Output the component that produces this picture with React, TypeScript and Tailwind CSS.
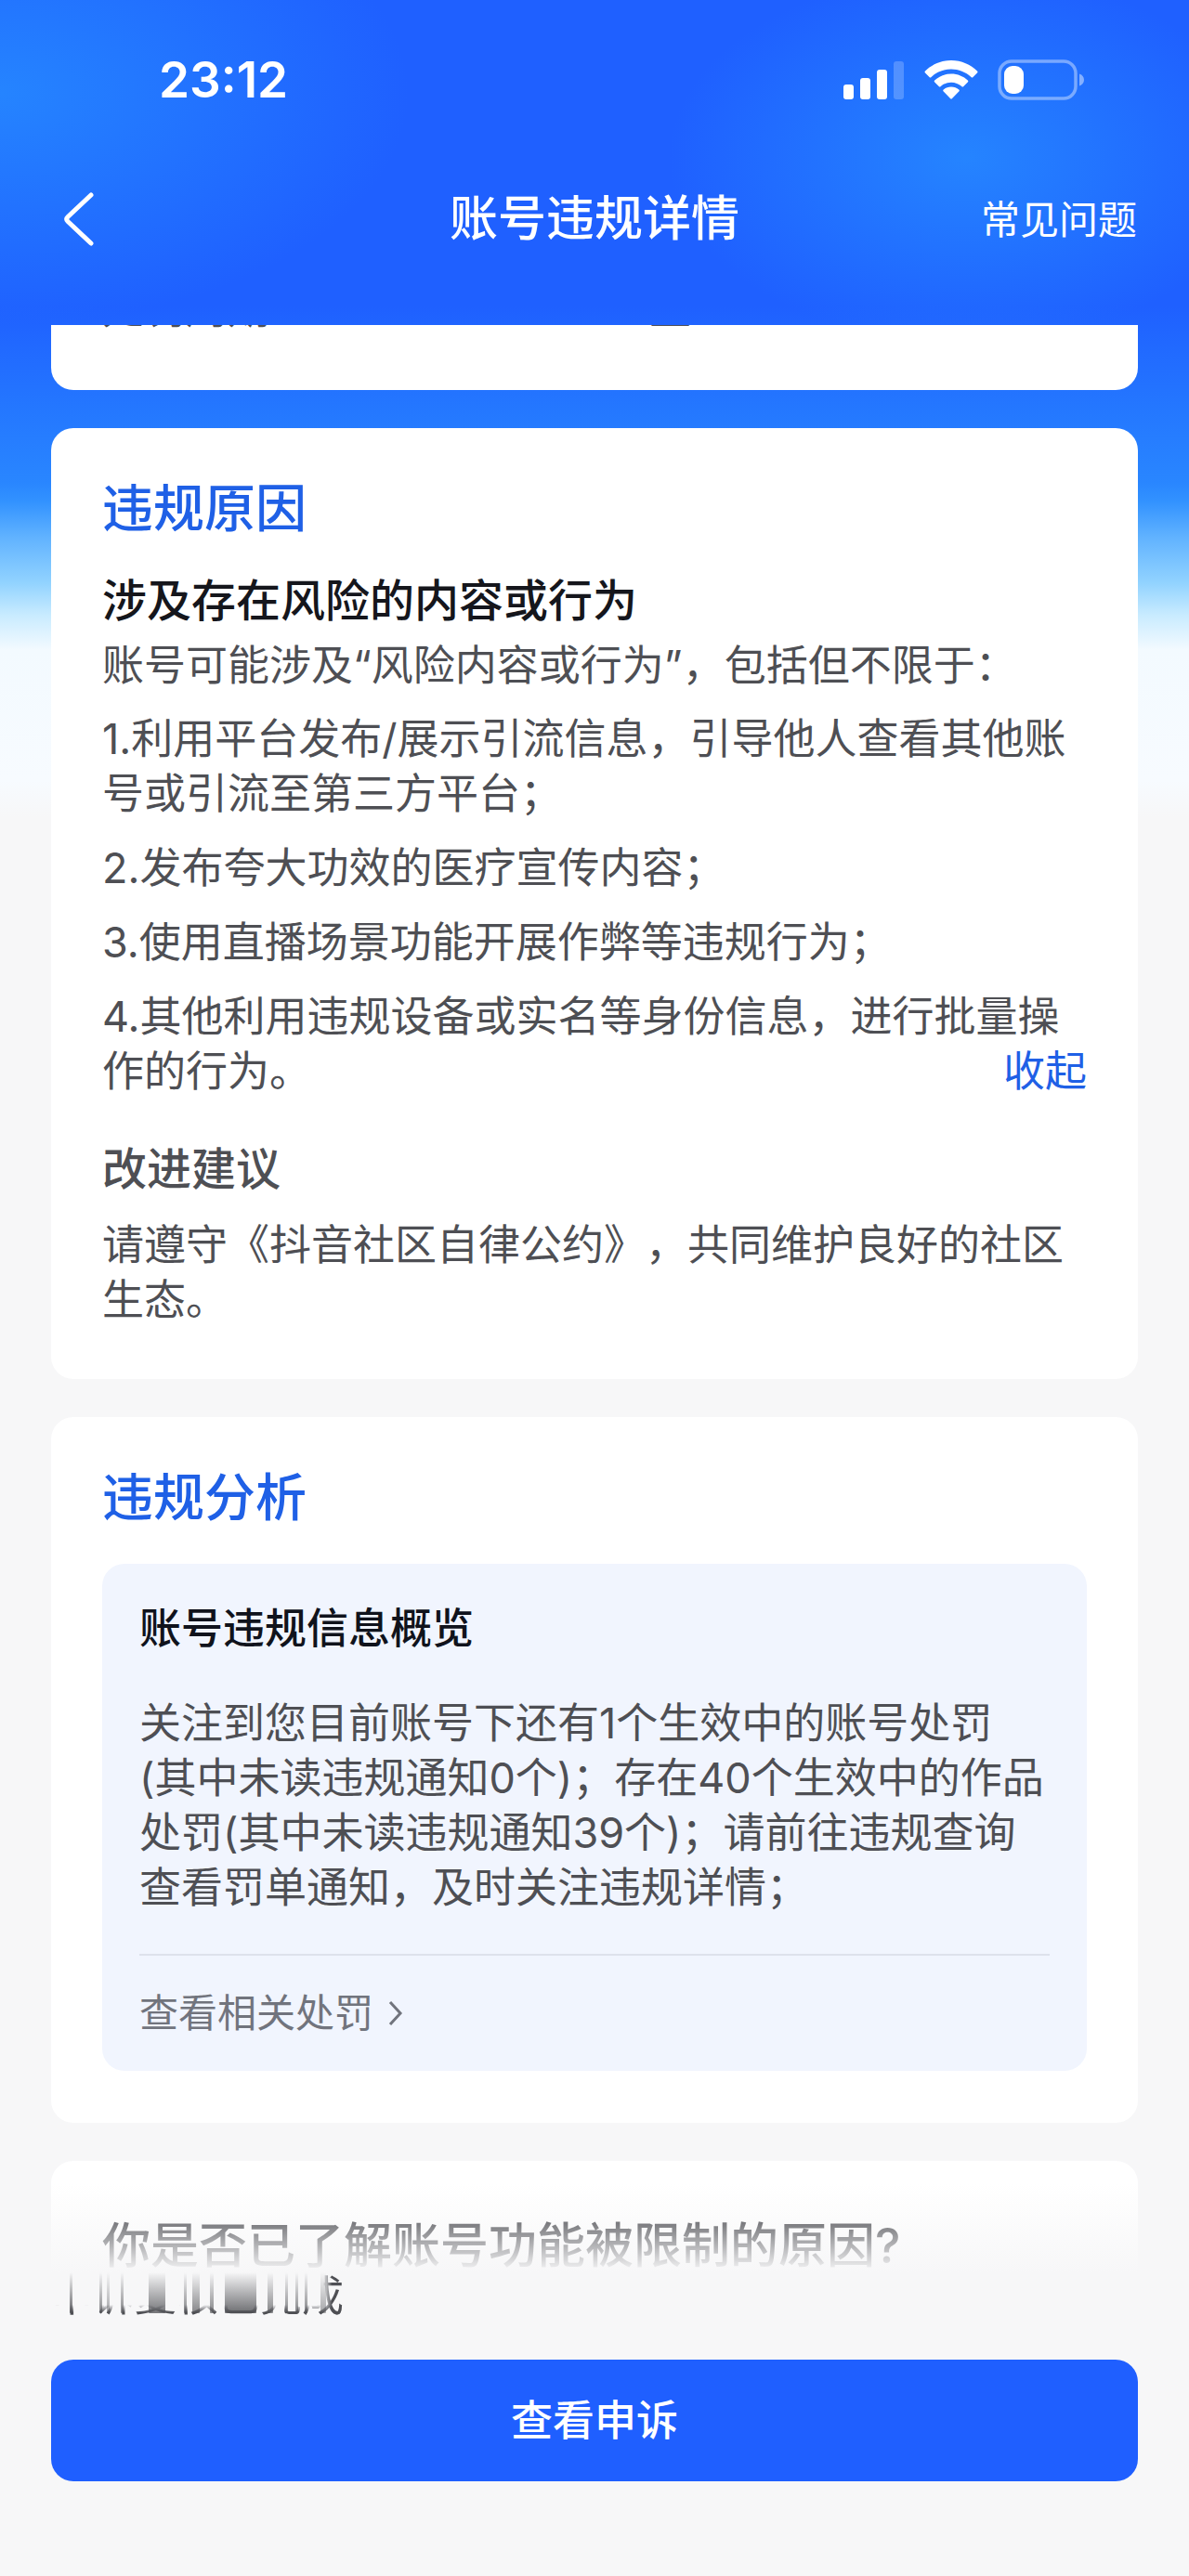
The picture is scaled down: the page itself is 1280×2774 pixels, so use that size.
import type { ReactNode } from "react";

const reasons = [
  "1.利用平台发布/展示引流信息，引导他人查看其他账号或引流至第三方平台；",
  "2.发布夸大功效的医疗宣传内容；",
  "3.使用直播场景功能开展作弊等违规行为；",
  "4.其他利用违规设备或实名等身份信息，进行批量操作的行为。",
];

// [x, width, opacity] of each streak left behind by the scrolling toast
const streaks = [
  [20, 3, 0.9],
  [52, 3, 0.7],
  [60, 3, 0.5],
  [75, 3, 0.7],
  [105, 18, 0.8],
  [143, 3, 0.7],
  [152, 8, 0.7],
  [171, 4, 0.7],
  [187, 34, 0.85],
  [233, 6, 0.7],
  [252, 3, 0.7],
  [263, 3, 0.7],
  [273, 3, 0.7],
  [290, 6, 0.5],
];

function StatusBar() {
  return (
    <div className="flex h-[60px] items-center justify-between pl-[171px] pr-28">
      <span className="text-[53px] font-semibold leading-[60px]">23:12</span>
      <div className="flex items-center">
        <svg width="66" height="42" viewBox="0 0 66 42" fill="currentColor" aria-hidden="true">
          <rect x="0" y="26" width="11" height="16" rx="3" />
          <rect x="18" y="19" width="11" height="23" rx="3" />
          <rect x="36" y="10" width="11" height="32" rx="3" />
          <rect x="54" y="1" width="11" height="41" rx="3" opacity="0.22" />
        </svg>
        <svg className="ml-5" width="60" height="44" viewBox="0 0 60 44" fill="currentColor" aria-hidden="true">
          <path d="M30 1C19 1 9 5.500 2 12.500Q1 13.500 2 14.500L6.500 19Q7.500 20 8.500 19C14.500 13.500 22 10.500 30 10.500S45.500 13.500 51.500 19Q52.500 20 53.500 19L58 14.500Q59 13.500 58 12.500C51 5.500 41 1 30 1Z" />
          <path d="M30 15.500C23 15.500 16.800 18.200 12.200 22.500Q11.200 23.500 12.200 24.500L16.700 29Q17.700 30 18.700 29C21.800 26.300 25.700 24.700 30 24.700S38.200 26.300 41.300 29Q42.300 30 43.300 29L47.800 24.500Q48.800 23.500 47.800 22.500C43.200 18.200 37 15.500 30 15.500Z" />
          <path d="M30 29.500C26.800 29.500 24 30.600 21.700 32.400Q20.700 33.400 21.700 34.400L29 42Q30 43 31 42L38.300 34.400Q39.300 33.400 38.300 32.400C36 30.600 33.200 29.500 30 29.500Z" />
        </svg>
        <svg className="ml-5" width="94" height="44" viewBox="0 0 94 44" aria-hidden="true">
          <rect x="2" y="2" width="82" height="40" rx="13" fill="none" stroke="currentColor" strokeWidth="3.500" opacity="0.4" />
          <path d="M88 15.500C91 16.500 93 19 93 22S91 27.500 88 28.500Z" fill="currentColor" opacity="0.45" />
          <rect x="7" y="7" width="21" height="30" rx="9" fill="currentColor" />
        </svg>
      </div>
    </div>
  );
}

function Card({ children }: { children: ReactNode }) {
  return <section className="rounded-3xl bg-white px-[55px] pb-14 pt-[54px]">{children}</section>;
}

function CardTitle({ children }: { children: ReactNode }) {
  return <h2 className="text-[55px] font-medium leading-[64px] text-[#1f60e6]">{children}</h2>;
}

export default function App() {
  return (
    <div
      lang="zh-CN"
      className="flex min-h-screen flex-col bg-[#f7f7f8] bg-[linear-gradient(to_bottom,#1f60ff_0px,#1f60ff_330px,#2477ff_440px,#2986ff_520px,#3292ff_540px,#60b2ff_578px,#92d3ff_628px,#c8ebff_662px,#f3faff_700px,#f7fbff_840px,#f7f7f8_880px)] font-[Inter,'Noto_Sans_CJK_SC',sans-serif] text-[45px] leading-[59px] text-[#4e4f54] [text-spacing-trim:space-all]"
    >
      <header className="h-[350px] bg-[radial-gradient(440px_250px_at_0px_100px,#2584ff,transparent),radial-gradient(320px_200px_at_1040px_170px,#2584ff,transparent)] pt-14 text-white">
        <StatusBar />
        <div className="mt-20 grid grid-cols-3 items-center px-14">
          <button type="button" aria-label="返回" className="justify-self-start pl-2">
            <svg width="40" height="60" viewBox="0 0 40 60" fill="none" stroke="currentColor" strokeWidth="5" strokeLinecap="round" strokeLinejoin="round" aria-hidden="true">
              <path d="M34 4L9 27.500Q6.500 30 9 32.500L34 56" />
            </svg>
          </button>
          <h1 className="justify-self-center whitespace-nowrap text-[52px] font-medium leading-[80px]">账号违规详情</h1>
          <a href="#faq" className="justify-self-end text-[42px]">常见问题</a>
        </div>
      </header>

      <main className="flex flex-col gap-[41px] px-[55px]">
        {/* Scrolled under the header */}
        <section className="flex h-[70px] items-start overflow-hidden rounded-b-3xl bg-white px-[55px]">
          <div className="-mt-[47px] grid w-full grid-cols-[5fr_4fr]">
            <span>处罚周期</span>
            <span>至</span>
          </div>
        </section>

        {/* Reason */}
        <Card>
          <CardTitle>违规原因</CardTitle>
          <h3 className="mt-9 text-[48px] font-medium leading-[64px] text-[#15161c]">涉及存在风险的内容或行为</h3>
          <p className="mt-2">账号可能涉及“风险内容或行为”，包括但不限于：</p>
          <ul className="mt-5 flex flex-col gap-[21px]">
            {reasons.map((reason, i) => (
              <li key={reason}>
                {reason}
                {i === reasons.length - 1 && (
                  <button type="button" className="float-right text-[#1f60e6]">收起</button>
                )}
              </li>
            ))}
          </ul>
          <h3 className="mt-11 text-[48px] font-medium leading-[64px]">改进建议</h3>
          <p className="mt-5">请遵守《抖音社区自律公约》，共同维护良好的社区生态。</p>
        </Card>

        {/* Analysis */}
        <Card>
          <CardTitle>违规分析</CardTitle>
          <div className="mt-10 rounded-3xl bg-[#f1f5fe] px-10 pb-8 pt-10">
            <h3 className="font-medium leading-[60px] text-[#10131c]">账号违规信息概览</h3>
            <p className="mt-[42px] pr-0.5">
              关注到您目前账号下还有1个生效中的账号处罚(其中未读违规通知0个)；存在40个生效中的作品处罚(其中未读违规通知39个)；请前往违规查询查看罚单通知，及时关注违规详情；
            </p>
            <hr className="mt-[42px] border-t-2 border-[#dee2ec]" />
            <a href="#penalties" className="mt-8 flex items-center gap-4 text-[42px] leading-[60px] text-[#71747d]">
              查看相关处罚
              <svg width="16" height="28" viewBox="0 0 16 28" fill="none" stroke="currentColor" strokeWidth="3" aria-hidden="true">
                <path d="M2 2L13 14L2 26" />
              </svg>
            </a>
          </div>
        </Card>

        {/* Feedback question, fading into the bottom bar */}
        <section className="relative h-[120px] overflow-hidden rounded-t-3xl bg-white px-[55px] pt-[60px]">
          <h2 className="whitespace-nowrap text-[52px] font-medium leading-[64px] text-[#15161c]">你是否已了解账号功能被限制的原因?</h2>
          <div className="absolute inset-0 bg-linear-to-b from-transparent from-20% to-[#f7f7f8]" />
        </section>
      </main>

      <footer className="px-[55px] pb-[101px]">
        <div className="relative h-[52px] w-[320px]">
          <svg className="absolute left-0 top-0" width="320" height="46" aria-hidden="true">
            <defs>
              <linearGradient id="streak" x1="0" y1="0" x2="0" y2="1">
                <stop offset="0" stopColor="#55565a" stopOpacity="0" />
                <stop offset="1" stopColor="#55565a" />
              </linearGradient>
            </defs>
            {streaks.map(([x, width, opacity]) => (
              <rect key={x} x={x} y="0" width={width} height="44" rx="1" fill="url(#streak)" opacity={opacity} />
            ))}
          </svg>
          <p className="absolute -top-1 left-0 whitespace-nowrap bg-[linear-gradient(to_right,transparent_93%,#4e4f54_96%),linear-gradient(to_bottom,transparent_66%,#4e4f54_80%)] bg-clip-text text-transparent">
            申诉复核已完成
          </p>
        </div>
        <button type="button" className="mt-[42px] h-[131px] w-full rounded-3xl bg-[#1f5fff] font-medium text-white">
          查看申诉
        </button>
      </footer>
    </div>
  );
}
